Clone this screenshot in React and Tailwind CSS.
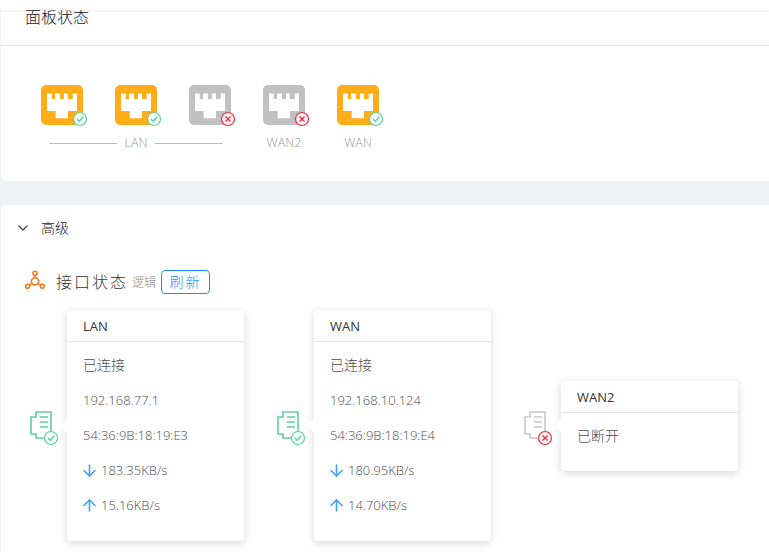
import React from 'react';
import { ChevronDown, ArrowDown, ArrowUp } from 'lucide-react';

const GREEN = '#5fd1a1';
const RED = '#f5293f';

function StatusBadge({ ok, cx, cy }) {
  const color = ok ? GREEN : RED;
  return (
    <g>
      <circle cx={cx} cy={cy} r="6.5" fill={ok ? '#f3fcf8' : '#fff5f6'} stroke={color} strokeWidth="1.2" />
      {ok ? (
        <path d={`M${cx - 3} ${cy} l2.2 2.4 l4 -4.6`} fill="none" stroke={color} strokeWidth="1.4" />
      ) : (
        <path d={`M${cx - 2.5} ${cy - 2.5} l5 5 M${cx + 2.5} ${cy - 2.5} l-5 5`} fill="none" stroke={color} strokeWidth="1.4" />
      )}
    </g>
  );
}

function PortIcon({ on }) {
  return (
    <svg width="48" height="42" viewBox="0 0 48 42" className="block">
      <rect x="0" y="0" width="42" height="40" rx="5" fill={on ? '#ffae19' : '#c1c1c1'} />
      <path d="M6 8.500h4.700v5.500H14V8.500h5v5.500h4V8.500h4v5.500h4.700V8.500H36V26h-9v7.300H14.700V26H6z" fill="#fff" />
      <StatusBadge ok={on} cx={39} cy={34} />
    </svg>
  );
}

function DocIcon({ on }) {
  const c = on ? GREEN : '#c8c8c8';
  return (
    <svg width="30" height="36" viewBox="0 0 30 36" className="block">
      <path d="M7 2h15v26H7v-4H2V7h5z" fill="#fff" stroke={c} strokeWidth="1.6" />
      <path d="M11 7h8M11 12h8M11 17h8" stroke={c} strokeWidth="1.6" />
      <StatusBadge ok={on} cx={22} cy={28} />
    </svg>
  );
}

function NetworkIcon() {
  return (
    <svg width="22" height="20" viewBox="0 0 22 20" className="-mt-[6px] block" fill="none" stroke="#f9771c" strokeWidth="1.6">
      <circle cx="10" cy="4.300" r="2" />
      <circle cx="10" cy="12.300" r="3.600" />
      <circle cx="2.700" cy="17.300" r="2" />
      <circle cx="17.300" cy="17.300" r="2" />
      <path d="M10 6.300v2.400M7 14.300l-2.700 1.800M13 14.300l2.700 1.800" />
    </svg>
  );
}

function Port({ on }) {
  return (
    <div className="w-[74px] shrink-0">
      <PortIcon on={on} />
    </div>
  );
}

function InterfaceCard({ name, connected, ip, mac, down, up }) {
  return (
    <div className="flex items-center w-[247px] shrink-0">
      <div className="w-[38px] mt-[4px] shrink-0">
        <DocIcon on={connected} />
      </div>
      <div className="relative w-[177px] shrink-0 rounded bg-white shadow-[0_2px_8px_rgba(0,0,0,0.16)]">
        <span className="absolute left-[-5px] top-1/2 h-[10px] w-[10px] -translate-y-1/2 rotate-45 bg-white" />
        <div className="h-[32px] border-b border-[#e6e6e6] px-4 text-[13px] leading-[32px] text-[#333]">{name}</div>
        {connected ? (
          <div className="relative px-4 pt-[6px] pb-[18px] text-[13px] font-light text-[#4d4d4d]">
            <div className="h-[35px] text-sm leading-[33px]">已连接</div>
            <div className="h-[35px] leading-[35px]">{ip}</div>
            <div className="h-[35px] leading-[35px]">{mac}</div>
            <div className="flex h-[35px] items-center">
              <ArrowDown className="-ml-[3px] mr-[2px] h-[19px] w-[19px] text-[#3ea0f7]" strokeWidth={2} />
              {down}
            </div>
            <div className="flex h-[35px] items-center">
              <ArrowUp className="-ml-[3px] mr-[2px] h-[19px] w-[19px] text-[#3ea0f7]" strokeWidth={2} />
              {up}
            </div>
          </div>
        ) : (
          <div className="relative px-4 pt-[6px] pb-[19px] text-sm font-light leading-[33px] text-[#4d4d4d]">已断开</div>
        )}
      </div>
    </div>
  );
}

export default function App() {
  return (
    <div
      className="h-[552px] w-[769px] overflow-hidden bg-[#f0f2f6]"
      style={{ fontFamily: '"Open Sans", "Noto Sans CJK SC", sans-serif' }}
    >
      <div className="relative h-[10px] bg-white shadow-[0_1px_3px_rgba(0,0,0,0.08)]" />

      {/* 面板状态 */}
      <section className="ml-px h-[171px] rounded-bl-md bg-white">
        <div className="h-[36px] border-b border-[#e6e6e6] pl-6 text-base font-light leading-[15px] text-[#222]">面板状态</div>
        <div className="pl-10 pt-[39px]">
          <div className="flex">
            <Port on />
            <Port on />
            <Port />
            <Port />
            <Port on />
          </div>
          <div className="mt-[8px] flex text-[12.5px] font-light leading-[16px] text-[#999]">
            <div className="ml-2 flex w-[174px] items-center gap-2">
              <span className="h-px flex-1 bg-[#bbb]" />
              <span>LAN</span>
              <span className="h-px flex-1 bg-[#bbb]" />
            </div>
            <div className="ml-[26px] w-[70px] text-center">WAN2</div>
            <div className="ml-[4px] w-[70px] text-center">WAN</div>
          </div>
        </div>
      </section>

      {/* 高级 */}
      <section className="ml-px mt-6 h-[347px] rounded-tl-md bg-white">
        <div className="flex h-[46px] items-center pl-[14px] text-sm font-light text-[#222]">
          <ChevronDown className="h-[16px] w-[16px] text-[#444]" strokeWidth={1.8} />
          <span className="ml-[10px]">高级</span>
        </div>
        <div className="mt-[18px] flex h-[26px] items-center pl-6">
          <NetworkIcon />
          <span className="ml-[9px] text-base font-light tracking-[2px] text-[#333]">接口状态</span>
          <span className="ml-[4px] mt-[2px] text-xs font-light text-[#888]">逻辑</span>
          <span className="ml-[5px] flex h-[24px] w-[49px] items-center justify-center rounded border border-[#1890ff] text-sm font-light tracking-[2px] text-[#1890ff]">
            刷新
          </span>
        </div>
        <div className="mt-[15px] flex h-[231px] items-center pl-[28px]">
          <InterfaceCard name="LAN" connected ip="192.168.77.1" mac="54:36:9B:18:19:E3" down="183.35KB/s" up="15.16KB/s" />
          <InterfaceCard name="WAN" connected ip="192.168.10.124" mac="54:36:9B:18:19:E4" down="180.95KB/s" up="14.70KB/s" />
          <InterfaceCard name="WAN2" />
        </div>
      </section>
    </div>
  );
}
